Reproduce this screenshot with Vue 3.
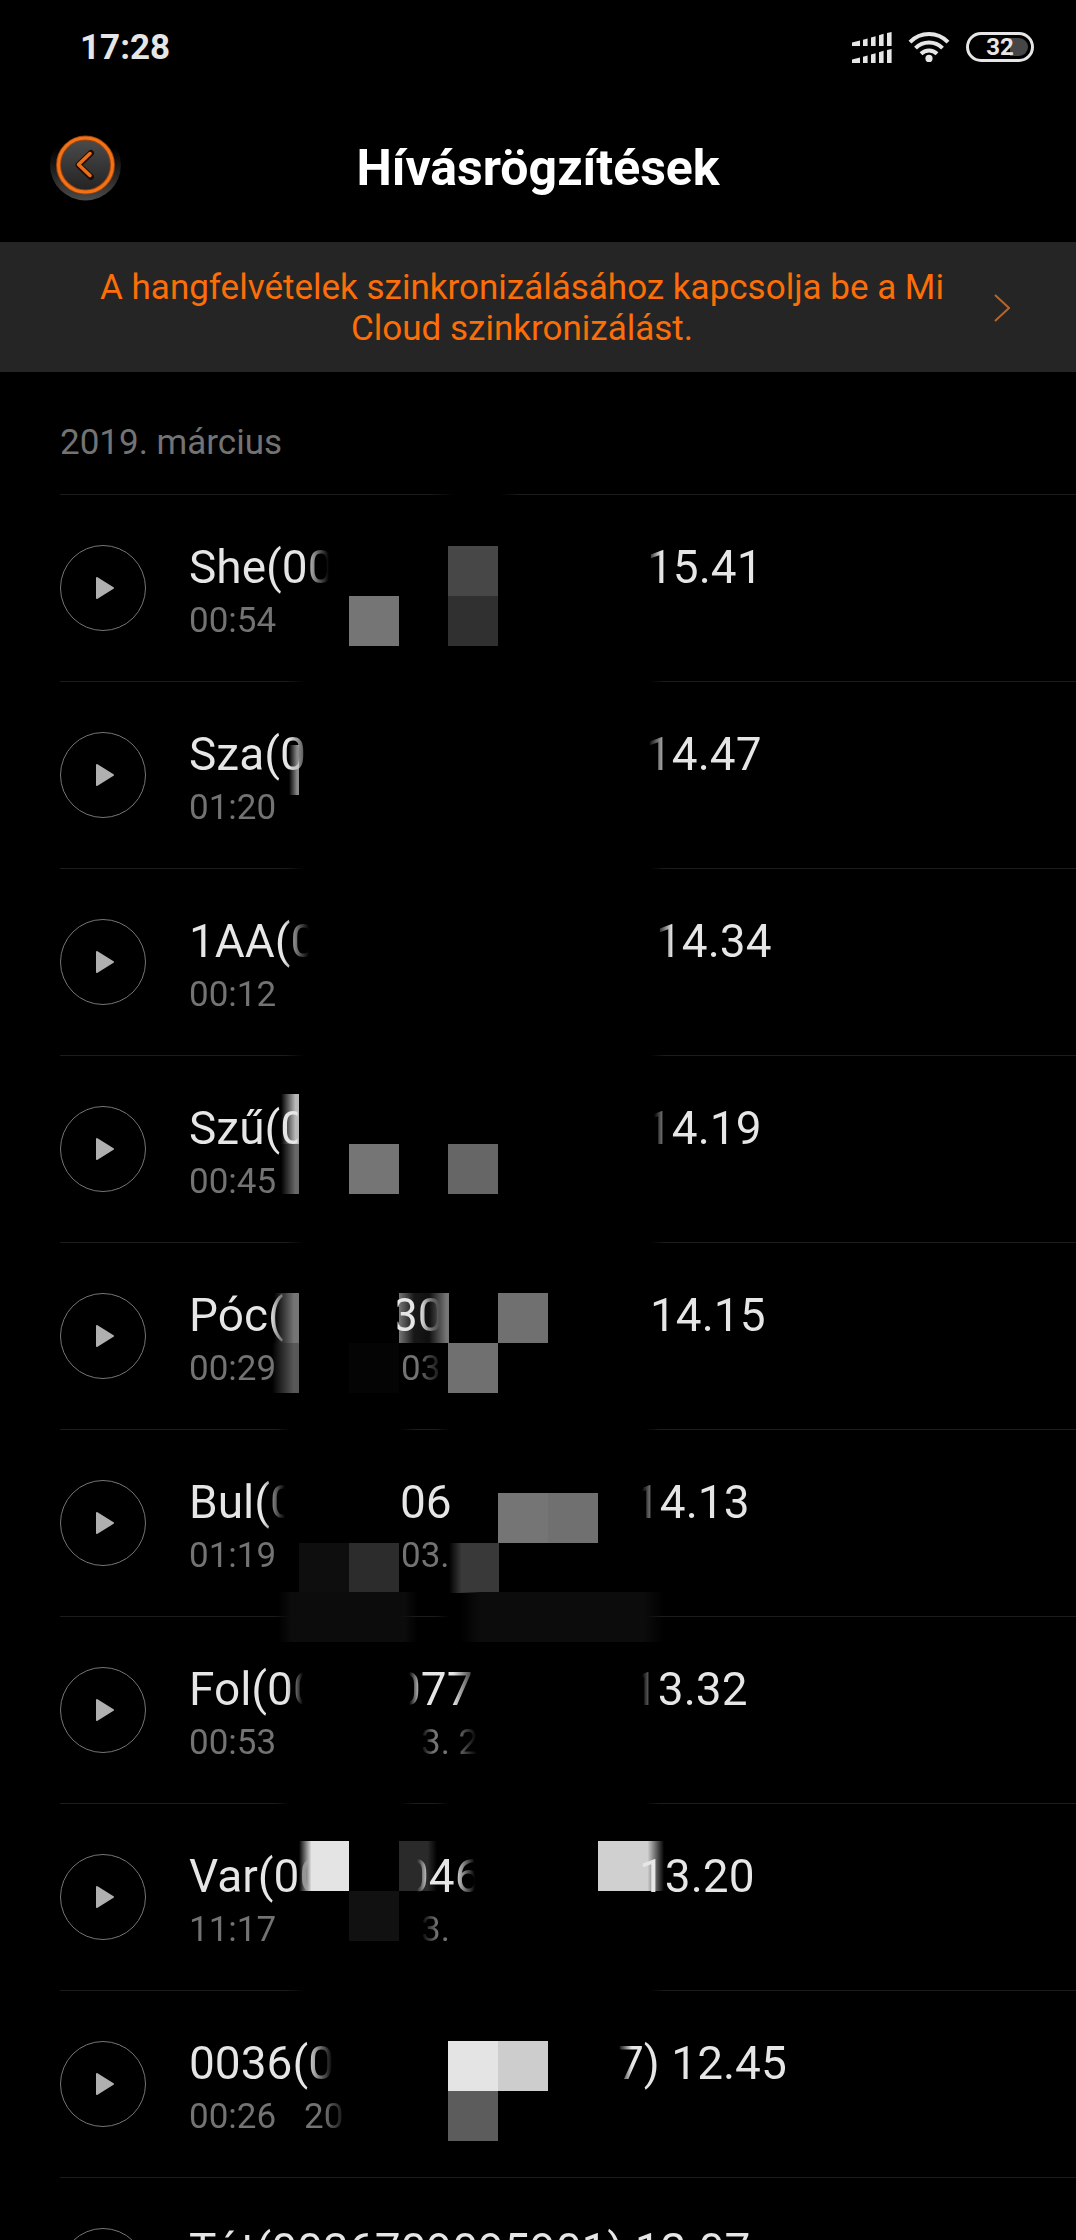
<template>
  <div class="screen">
    <div class="status-bar">
      <span class="clock">17:28</span>
      <div class="status-icons">
        <svg class="signal" viewBox="0 0 40 31" aria-hidden="true">
          <g v-for="dy in [0, 17]" :key="dy" :transform="`translate(0 ${dy})`">
            <path d="M0 10.4L8 8.6V14H0zM11 7.8L15.6 6.6V14H11zM19 5.6L23.6 4.2V14H19zM27 3.2L31.6 1.8V14H27zM35 1L39.6 0V14H35z" />
          </g>
        </svg>
        <svg class="wifi" viewBox="0 0 42 30" aria-hidden="true">
          <path d="M2 10.2C12.5 -.6 29.5 -.6 40 10.2M7.5 16.2C15 8.6 27 8.6 34.5 16.2M13 21.8C17.5 17.4 24.5 17.4 29 21.8" />
          <circle cx="21" cy="26.4" r="3.6" />
        </svg>
        <div class="battery">
          <span class="battery-level"></span>
          <span class="battery-text">32</span>
        </div>
      </div>
    </div>

    <header class="header">
      <button class="back" type="button" aria-label="Vissza">
        <svg viewBox="0 0 72 72" aria-hidden="true">
          <defs>
            <linearGradient id="rim" x1="0" y1="0" x2="0" y2="1">
              <stop offset="0.25" stop-color="#000" />
              <stop offset="0.7" stop-color="#2c2c2c" />
              <stop offset="1" stop-color="#4a4a4a" />
            </linearGradient>
            <linearGradient id="knob" x1="0" y1="0" x2="0" y2="1">
              <stop offset="0" stop-color="#4c4c4c" />
              <stop offset="1" stop-color="#222" />
            </linearGradient>
          </defs>
          <circle cx="35.5" cy="33" r="35.5" fill="url(#rim)" />
          <circle cx="35.5" cy="33" r="27" fill="url(#knob)" stroke="#a0440c" stroke-width="5" />
          <circle cx="35.5" cy="33" r="27" fill="none" stroke="#f47216" stroke-width="3" />
          <path d="M41 21L28.5 33L41 45" stroke="#1c0d04" stroke-width="6" />
          <path d="M40 21.5L28.5 32.5L40 43.5" stroke="#e8701c" stroke-width="3.5" />
        </svg>
      </button>
      <h1>Hívásrögzítések</h1>
    </header>

    <button class="sync-banner" type="button">
      <span>A hangfelvételek szinkronizálásához kapcsolja be a Mi Cloud szinkronizálást.</span>
      <svg viewBox="0 0 16 28" aria-hidden="true"><path d="M1 1L15 14L1 27" /></svg>
    </button>

    <h2 class="month">2019. március</h2>

    <div class="recordings">
      <svg class="mosaic" aria-hidden="true">
        <defs>
          <linearGradient id="ramp">
            <stop offset="0" stop-color="#000" />
            <stop offset="0.8" stop-color="#fff" />
          </linearGradient>
          <linearGradient id="ramp-start">
            <stop offset="0" stop-color="#000" />
            <stop offset="0.25" stop-color="#fff" />
          </linearGradient>
          <linearGradient id="ramp-end">
            <stop offset="0.75" stop-color="#fff" />
            <stop offset="1" stop-color="#000" />
          </linearGradient>
          <linearGradient id="ramp-middle">
            <stop offset="0" stop-color="#fff" />
            <stop offset="0.3" stop-color="#333" />
            <stop offset="0.6" stop-color="#222" />
            <stop offset="0.95" stop-color="#fff" />
          </linearGradient>
          <linearGradient id="ramp-both">
            <stop offset="0" stop-color="#000" />
            <stop offset="0.1" stop-color="#fff" />
            <stop offset="0.9" stop-color="#fff" />
            <stop offset="1" stop-color="#000" />
          </linearGradient>
          <mask
            v-for="name in ramps"
            :id="`fade-${name}`"
            :key="name"
            maskContentUnits="objectBoundingBox"
          >
            <rect width="1" height="1" :fill="`url(#${name})`" />
          </mask>
        </defs>
        <rect
          v-for="(tile, i) in tiles"
          :key="i"
          :x="tile.x"
          :y="tile.y"
          :width="tile.w || 50"
          height="50"
          :fill="tile.fill"
          :mask="tile.ramp ? `url(#fade-${tile.ramp})` : null"
        />
      </svg>

      <ul>
        <li v-for="rec in recordings" :key="rec.title[0].text" class="row" :class="rec.line">
          <button class="play" type="button" aria-label="Lejátszás">
            <svg viewBox="0 0 20 24" aria-hidden="true">
              <path d="M2 2L18 12L2 22z" />
            </svg>
          </button>
          <div class="info">
            <p class="title" :style="{ gridTemplateColumns: columns(rec.title) }">
              <span v-for="part in rec.title" :key="part.x" :style="ink(part)">{{ part.text }}</span>
            </p>
            <p class="meta" :style="{ gridTemplateColumns: columns(rec.meta) }">
              <span v-for="part in rec.meta" :key="part.x" :style="ink(part)">{{ part.text }}</span>
            </p>
          </div>
        </li>
      </ul>
    </div>
  </div>
</template>

<script setup>
const ramps = ['ramp', 'ramp-start', 'ramp-end', 'ramp-middle', 'ramp-both']

// x: start of the fragment, fadeIn / fadeOut: px range inside the fragment
const recordings = [
  {
    line: 'line-short-gap',
    title: [{ x: 0, text: 'She(00', fadeOut: [115, 140] }, { x: 458, text: '15.41', fadeIn: [0, 14] }],
    meta: [{ x: 0, text: '00:54' }]
  },
  {
    line: 'line-gap',
    title: [{ x: 0, text: 'Sza(0', fadeOut: [100, 124] }, { x: 457, text: '14.47', fadeIn: [2, 22] }],
    meta: [{ x: 0, text: '01:20' }]
  },
  {
    line: 'line-gap',
    title: [{ x: 0, text: '1AA(0', fadeOut: [95, 120] }, { x: 467, text: '14.34', fadeIn: [0, 16] }],
    meta: [{ x: 0, text: '00:12' }]
  },
  {
    line: 'line-gap',
    title: [{ x: 0, text: 'Szű(0', fadeOut: [108, 109] }, { x: 457, text: '14.19', fadeIn: [8, 25] }],
    meta: [{ x: 0, text: '00:45' }]
  },
  {
    line: 'line-gap',
    title: [
      { x: 0, text: 'Póc(', fadeOut: [82, 100] },
      { x: 203, text: '30', fadeIn: [5, 6], fadeOut: [28, 48] },
      { x: 461, text: '14.15' }
    ],
    meta: [{ x: 0, text: '00:29' }, { x: 212, text: '03', fadeOut: [16, 44] }]
  },
  {
    line: 'line-split',
    title: [
      { x: 0, text: 'Bul(0', fadeOut: [74, 96] },
      { x: 211, text: '06' },
      { x: 445, text: '14.13', fadeIn: [8, 25] }
    ],
    meta: [{ x: 0, text: '01:19' }, { x: 212, text: '03.' }]
  },
  {
    line: 'line-split',
    title: [
      { x: 0, text: 'Fol(00', fadeOut: [98, 114] },
      { x: 206, text: '077', fadeIn: [14, 26], fadeOut: [58, 84] },
      { x: 443, text: '13.32', fadeIn: [10, 26] }
    ],
    meta: [{ x: 0, text: '00:53' }, { x: 232, text: '3. 2', fadeIn: [0, 12], fadeOut: [36, 56] }]
  },
  {
    line: 'line-split',
    title: [
      { x: 0, text: 'Var(00', fadeOut: [108, 120] },
      { x: 214, text: '046', fadeIn: [14, 26], fadeOut: [52, 72] },
      { x: 450, text: '13.20' }
    ],
    meta: [{ x: 0, text: '11:17' }, { x: 232, text: '3.', fadeIn: [0, 16] }]
  },
  {
    line: 'line-gap',
    title: [{ x: 0, text: '0036(0', fadeOut: [118, 144] }, { x: 429, text: '7) 12.45', fadeIn: [0, 14] }],
    meta: [{ x: 0, text: '00:26' }, { x: 115, text: '20', fadeOut: [20, 44] }]
  },
  {
    line: 'line-full',
    title: [{ x: 0, text: 'Tót(0036709095901) 12.07' }],
    meta: []
  }
]

const tiles = [
  { x: 349, y: 52, fill: '#000' },
  { x: 349, y: 102, fill: '#757575' },
  { x: 448, y: 52, fill: '#474747' },
  { x: 448, y: 102, fill: '#303030' },
  { x: 289, y: 251, w: 10, fill: '#888', ramp: 'ramp' },
  { x: 281, y: 600, w: 18, fill: '#b8b8b8', ramp: 'ramp' },
  { x: 281, y: 650, w: 18, fill: '#686868', ramp: 'ramp' },
  { x: 349, y: 650, fill: '#757575' },
  { x: 448, y: 650, fill: '#666' },
  { x: 274, y: 799, w: 25, fill: '#757575', ramp: 'ramp' },
  { x: 399, y: 799, fill: '#757575', ramp: 'ramp-middle' },
  { x: 498, y: 799, fill: '#707070' },
  { x: 272, y: 849, w: 27, fill: '#585858', ramp: 'ramp' },
  { x: 349, y: 849, fill: '#040404' },
  { x: 448, y: 849, fill: '#707070' },
  { x: 498, y: 999, fill: '#757575' },
  { x: 548, y: 999, fill: '#707070' },
  { x: 299, y: 1049, fill: '#0e0e0e' },
  { x: 349, y: 1049, fill: '#2c2c2c' },
  { x: 449, y: 1049, fill: '#393939', ramp: 'ramp-start' },
  { x: 278, y: 1098, w: 140, fill: '#0c0c0c', ramp: 'ramp-both' },
  { x: 460, y: 1098, w: 204, fill: '#0c0c0c', ramp: 'ramp-both' },
  { x: 299, y: 1347, fill: '#e4e4e4', ramp: 'ramp-start' },
  { x: 399, y: 1347, w: 38, fill: '#2a2a2a', ramp: 'ramp-end' },
  { x: 598, y: 1347, w: 66, fill: '#d0d0d0', ramp: 'ramp-end' },
  { x: 349, y: 1397, fill: '#111' },
  { x: 448, y: 1547, fill: '#e4e4e4' },
  { x: 498, y: 1547, fill: '#cdcdcd' },
  { x: 448, y: 1597, fill: '#5c5c5c' }
]

function columns(parts) {
  return parts
    .map((part, i) => (parts[i + 1] ? `${parts[i + 1].x - part.x}px` : 'auto'))
    .join(' ')
}

function ink(part) {
  const style = {}
  if (part.fadeIn) {
    style['--in-from'] = part.fadeIn[0] + 'px'
    style['--in-to'] = part.fadeIn[1] + 'px'
  }
  if (part.fadeOut) {
    style['--out-from'] = part.fadeOut[0] + 'px'
    style['--out-to'] = part.fadeOut[1] + 'px'
  }
  return style
}
</script>

<style>
body {
  background: #000;
}
</style>

<style scoped>
.screen {
  height: 100vh;
  overflow: hidden;
  background: #000;
  color: #e6e6e6;
  font-family: Roboto, "Liberation Sans", sans-serif;
}

button {
  border: none;
  padding: 0;
  background: none;
  color: inherit;
  font-family: inherit;
  cursor: pointer;
}

svg {
  display: block;
  flex: none;
}

.status-bar {
  display: flex;
  justify-content: space-between;
  align-items: center;
  height: 94px;
  padding: 0 42px 0 80px;
}

.clock {
  padding-top: 2px;
  font-size: 35px;
  font-weight: 700;
  line-height: 40px;
}

.status-icons {
  display: flex;
  align-items: center;
  gap: 16px;
}

.signal {
  width: 40px;
  height: 31px;
  fill: #e6e6e6;
}

.wifi {
  width: 42px;
  height: 30px;
  fill: none;
  stroke: #e6e6e6;
  stroke-width: 4;
}

.wifi circle {
  fill: #e6e6e6;
  stroke: none;
}

.battery {
  position: relative;
  display: flex;
  align-items: center;
  justify-content: center;
  box-sizing: border-box;
  width: 68px;
  height: 30px;
  border: 3px solid #e6e6e6;
  border-radius: 15px;
}

.battery-level {
  position: absolute;
  top: 3px;
  right: 3px;
  bottom: 3px;
  width: 18px;
  border-radius: 0 9px 9px 0;
  background: #464646;
}

.battery-text {
  position: relative;
  font-size: 24px;
  font-weight: 700;
  line-height: 24px;
}

.header {
  display: grid;
  grid-template-columns: 72px 1fr 72px;
  align-items: center;
  height: 148px;
  padding: 0 50px;
}

.back svg {
  width: 72px;
  height: 72px;
}

.back path {
  fill: none;
  stroke-linecap: round;
  stroke-linejoin: round;
}

h1 {
  margin: 0;
  color: #fff;
  font-size: 50px;
  font-weight: 700;
  line-height: 56px;
  text-align: center;
}

.sync-banner {
  display: flex;
  align-items: center;
  gap: 8px;
  width: 100%;
  padding: 25px 66px 23px 58px;
  background: #252525;
  color: #fc6e08;
  font-size: 35px;
  line-height: 41px;
  text-align: center;
}

.sync-banner span {
  flex: 1;
}

.sync-banner svg {
  width: 16px;
  height: 28px;
  fill: none;
  stroke: #b8642a;
  stroke-width: 2;
}

.month {
  margin: 0;
  padding: 51px 60px 31px;
  color: #737373;
  font-size: 35px;
  font-weight: 400;
  line-height: 40px;
}

.recordings {
  position: relative;
}

/* Censor blocks lie under the remaining glyphs */
.mosaic {
  position: absolute;
  top: 0;
  left: 0;
  width: 100%;
  height: 100%;
}

ul {
  position: relative;
  margin: 0;
  padding: 0 0 0 60px;
  list-style: none;
}

.row {
  display: flex;
  align-items: center;
  gap: 43px;
  height: 187px;
  background: linear-gradient(90deg, #1c1c1c, #1c1c1c) no-repeat;
  background-size: 100% 1px;
}

.row.line-short-gap {
  background-image: linear-gradient(90deg, #1c1c1c 370px, transparent 395px, transparent 440px, #1c1c1c 460px);
}

.row.line-gap {
  background-image: linear-gradient(90deg, #1c1c1c 225px, transparent 245px, transparent 590px, #1c1c1c 605px);
}

.row.line-split {
  background-image: linear-gradient(
    90deg,
    #1c1c1c 215px, transparent 230px, transparent 340px,
    #1c1c1c 355px, #1c1c1c 375px, transparent 390px,
    transparent 585px, #1c1c1c 600px
  );
}

.play {
  display: flex;
  align-items: center;
  justify-content: center;
  flex: none;
  box-sizing: border-box;
  width: 86px;
  height: 86px;
  border: 1px solid #757575;
  border-radius: 50%;
}

.play svg {
  width: 20px;
  height: 24px;
  margin-left: 4px;
  fill: #b0b0b0;
  stroke: #b0b0b0;
  stroke-width: 2;
  stroke-linejoin: round;
}

.info {
  display: grid;
  gap: 6px;
  flex: 1;
  padding-top: 4px;
}

.title,
.meta {
  --ink: #e6e6e6;
  display: grid;
  justify-items: start;
  min-height: 40px;
  margin: 0;
  font-size: 46px;
  line-height: 56px;
  white-space: pre;
}

.meta {
  --ink: #737373;
  font-size: 35px;
  line-height: 40px;
}

.title span,
.meta span {
  background: linear-gradient(
    90deg,
    transparent var(--in-from, 0),
    var(--ink) var(--in-to, 0),
    var(--ink) var(--out-from, 100%),
    transparent var(--out-to, 100%)
  );
  background-clip: text;
  color: transparent;
}
</style>
